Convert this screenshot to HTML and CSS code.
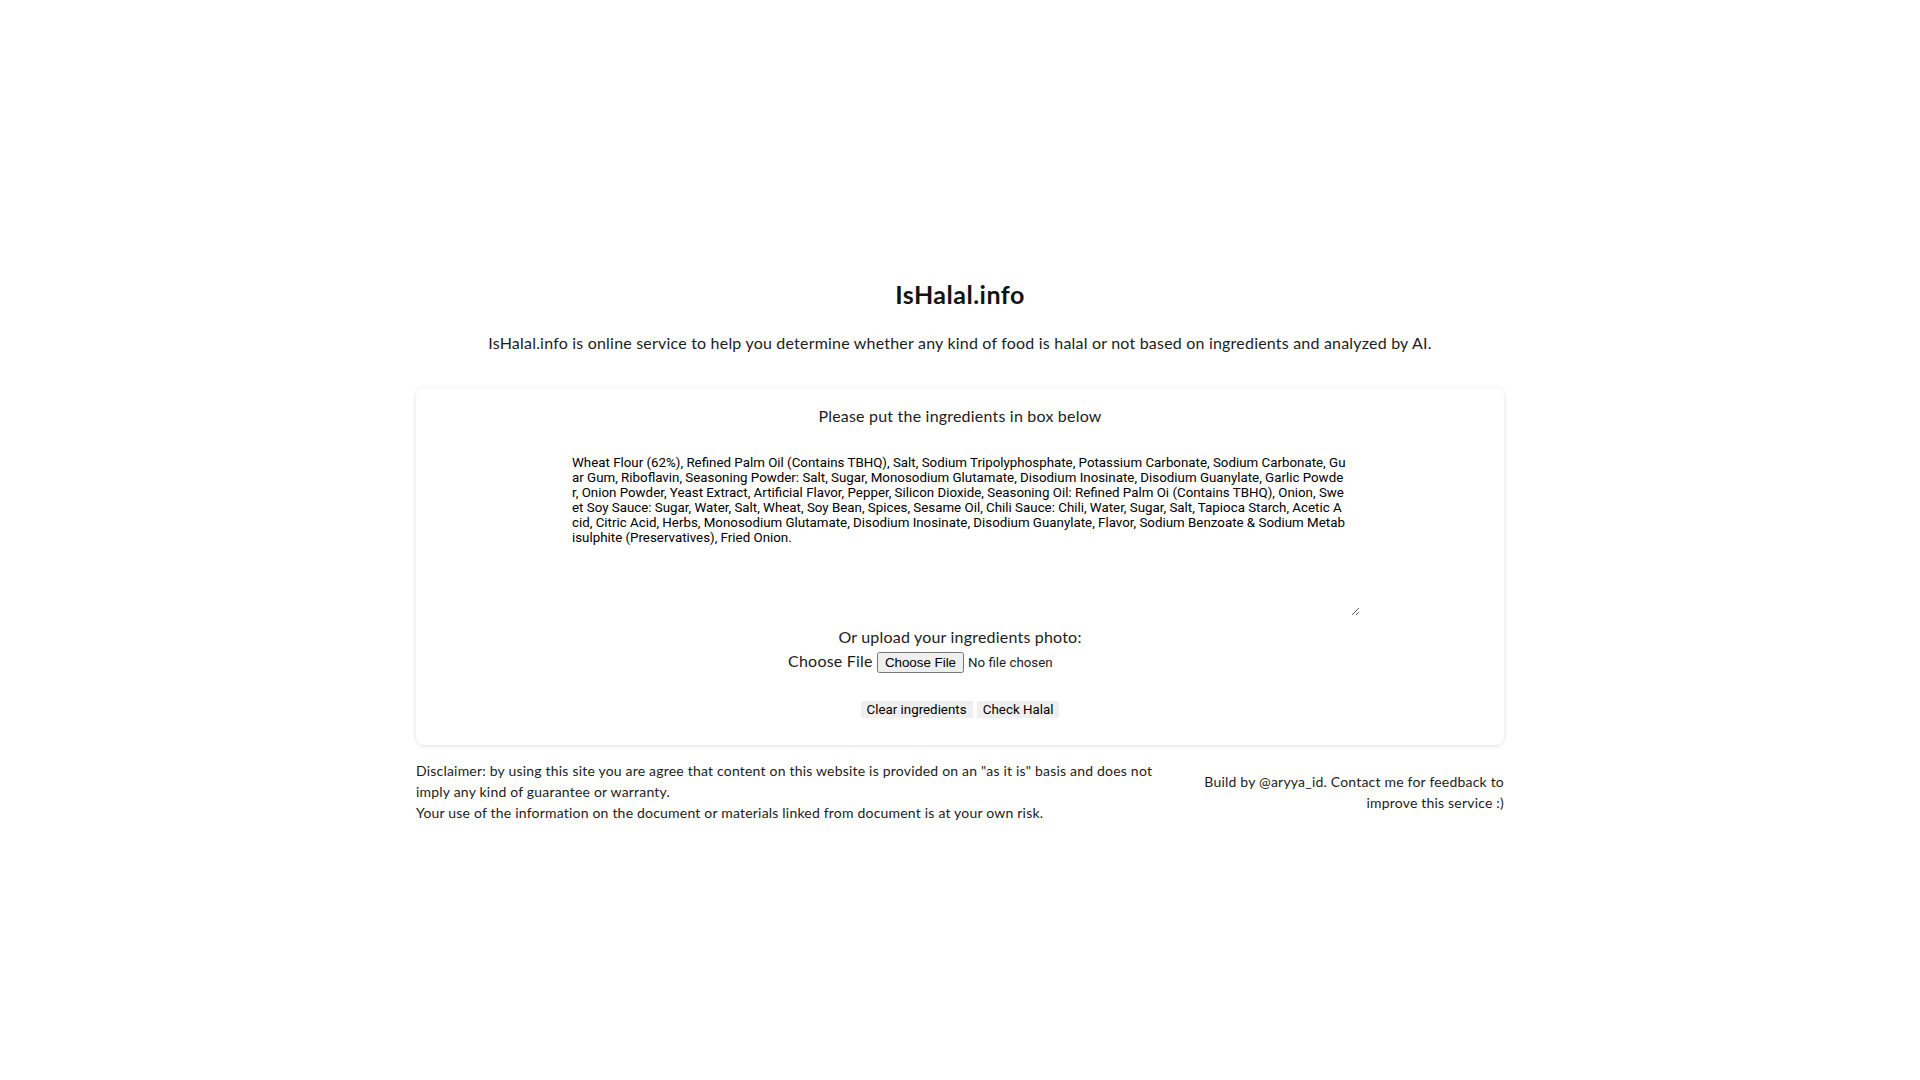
FILE: index.html
```html
<!DOCTYPE html>
<html lang="en">
<head>
<meta charset="utf-8">
<title>IsHalal.info</title>
<link rel="stylesheet" href="styles.css">
</head>
<body>
<main class="page">
  <h1 class="title">IsHalal.info</h1>
  <p class="subtitle">IsHalal.info is online service to help you determine whether any kind of food is halal or not based on ingredients and analyzed by AI.</p>
  <section class="card">
    <p class="card-heading">Please put the ingredients in box below</p>
    <textarea class="ingredients" spellcheck="false">Wheat Flour (62%), Refined Palm Oil (Contains TBHQ), Salt, Sodium Tripolyphosphate, Potassium Carbonate, Sodium Carbonate, Guar Gum, Riboflavin, Seasoning Powder: Salt, Sugar, Monosodium Glutamate, Disodium Inosinate, Disodium Guanylate, Garlic Powder, Onion Powder, Yeast Extract, Artificial Flavor, Pepper, Silicon Dioxide, Seasoning Oil: Refined Palm Oi (Contains TBHQ), Onion, Sweet Soy Sauce: Sugar, Water, Salt, Wheat, Soy Bean, Spices, Sesame Oil, Chili Sauce: Chili, Water, Sugar, Salt, Tapioca Starch, Acetic Acid, Citric Acid, Herbs, Monosodium Glutamate, Disodium Inosinate, Disodium Guanylate, Flavor, Sodium Benzoate &amp; Sodium Metabisulphite (Preservatives), Fried Onion.</textarea>
    <div class="upload-label">Or upload your ingredients photo:</div>
    <div class="upload-row"><label for="photo">Choose File</label> <input id="photo" type="file" class="file-input"></div>
    <div class="actions"><button class="btn">Clear ingredients</button> <button class="btn">Check Halal</button></div>
  </section>
  <footer class="footer">
    <div class="disclaimer">Disclaimer: by using this site you are agree that content on this website is provided on an "as it is" basis and does not<br>imply any kind of guarantee or warranty.<br>Your use of the information on the document or materials linked from document is at your own risk.</div>
    <div class="credit">Build by @aryya_id. Contact me for feedback to<br>improve this service :)</div>
  </footer>
</main>
</body>
</html>
```

FILE: styles.css
```css
html, body {
  margin: 0;
  padding: 0;
  background: #ffffff;
}

body {
  font-family: "Lato", "Noto Sans", sans-serif;
  color: #1c1c1c;
  letter-spacing: 0.2px;
}

.page {
  width: 1088px;
  margin: 0 auto;
  padding-top: 280px;
  text-align: center;
}

.title {
  margin: 0;
  font-size: 25px;
  line-height: 29px;
  font-weight: 700;
  letter-spacing: 0.5px;
  color: #141414;
}

.subtitle {
  margin: 22px 0 0;
  font-size: 16px;
  line-height: 24px;
}

.card {
  margin-top: 33px;
  background: #fff;
  border-radius: 8px;
  box-shadow: 0 1px 4px rgba(0, 0, 0, 0.13);
  padding: 16px 0 27px;
}

.card-heading {
  margin: 0;
  font-size: 16px;
  line-height: 24px;
}

.ingredients {
  display: block;
  box-sizing: border-box;
  width: 790px;
  height: 163px;
  margin: 25px auto 0;
  padding: 2px 12px 2px 2px;
  border: none;
  outline: none;
  resize: both;
  font-family: "Roboto", "Liberation Sans", sans-serif;
  font-size: 13.33px;
  line-height: 15px;
  letter-spacing: 0;
  color: #000;
  word-break: break-all;
  background: #fff;
  position: relative;
  left: 5px;
}

.upload-label {
  margin-top: 9px;
  font-size: 16px;
  line-height: 24px;
}

.upload-row {
  font-size: 16px;
  line-height: 24px;
}

.file-input {
  font-family: "Roboto", "Liberation Sans", sans-serif;
  font-size: 13.33px;
  letter-spacing: 0;
}

.actions {
  margin-top: 26px;
  line-height: 17px;
}

.btn {
  border: none;
  background: #efefef;
  color: #000;
  font-family: "Roboto", "Liberation Sans", sans-serif;
  font-size: 13.33px;
  letter-spacing: 0;
  padding: 1px 6px;
  border-radius: 0;
}

.footer {
  display: flex;
  justify-content: space-between;
  align-items: center;
  margin-top: 15px;
  text-align: left;
  font-size: 14px;
  line-height: 21px;
}

.credit {
  text-align: right;
}
```
